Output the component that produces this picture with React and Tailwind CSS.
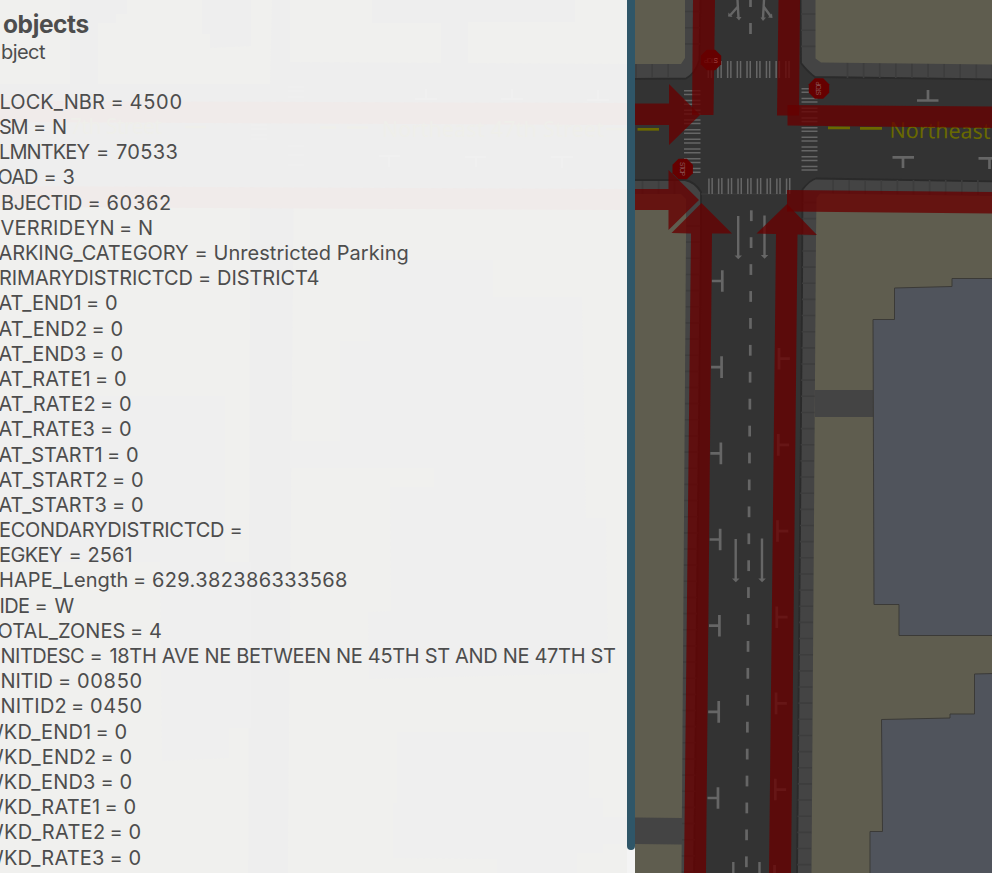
import React from "react";

const FAMILY = 'Inter, "Open Sans", sans-serif';
const ctx = document.createElement("canvas").getContext("2d");

// Text whose ink spans exactly `w` pixels, by adjusting the tracking.
function Fit({ text, w, size = 20, weight = 400 }) {
  ctx.font = `${weight} ${size}px ${FAMILY}`;
  const m = ctx.measureText(text);
  const ink = m.actualBoundingBoxRight + m.actualBoundingBoxLeft;
  const n = text.length - 1;
  const tracking = n > 0 ? (w - ink) / n : 0;
  return (
    <span className="block shrink-0 whitespace-pre" style={{ width: w }}>
      <span style={{ marginLeft: m.actualBoundingBoxLeft, letterSpacing: tracking, fontSize: size, fontWeight: weight }}>
        {text}
      </span>
    </span>
  );
}

// [key, key start, value, value start, value end]
const ROWS = [
  ["LOCK_NBR", 0.5, "4500", 130.5, 181.5],
  ["SM", 0, "N", 53, 65],
  ["LMNTKEY", 0, "70533", 116, 177.5],
  ["OAD", -1.5, "3", 63.5, 74],
  ["BJECTID", 2, "60362", 107.5, 170],
  ["VERRIDEYN", 0.5, "N", 139, 151],
  ["ARKING_CATEGORY", -1.5, "Unrestricted Parking", 214.5, 407.5],
  ["RIMARYDISTRICTCD", 0, "DISTRICT4", 218, 318.5],
  ["AT_END1", -1.5, "0", 106, 117],
  ["AT_END2", -1.5, "0", 111.5, 122.5],
  ["AT_END3", -1.5, "0", 111.5, 122.5],
  ["AT_RATE1", -1.5, "0", 115, 126],
  ["AT_RATE2", -1.5, "0", 120, 131],
  ["AT_RATE3", -1.5, "0", 120, 131],
  ["AT_START1", -1.5, "0", 127, 138],
  ["AT_START2", -1.5, "0", 132, 143],
  ["AT_START3", -1.5, "0", 132, 143],
  ["ECONDARYDISTRICTCD", 0, "", 249.5, 249.5],
  ["EGKEY", 0, "2561", 88.5, 131.5],
  ["HAPE_Length", 0, "629.382386333568", 153, 347],
  ["IDE", 0.5, "W", 54.5, 70],
  ["OTAL_ZONES", -1.5, "4", 150, 161.5],
  ["NITDESC", 1.5, "18TH AVE NE BETWEEN NE 45TH ST AND NE 47TH ST", 109.5, 615],
  ["NITID", 1.5, "00850", 78, 141.5],
  ["NITID2", 1.5, "0450", 91, 141.5],
  ["WKD_END1", -16, "0", 115.5, 126.5],
  ["WKD_END2", -16, "0", 120.5, 131.5],
  ["WKD_END3", -16, "0", 120.5, 131.5],
  ["WKD_RATE1", -16, "0", 124.5, 135.5],
  ["WKD_RATE2", -16, "0", 129.5, 140.5],
  ["WKD_RATE3", -16, "0", 129.5, 140.5],
];

function Row({ row }) {
  const [key, k0, value, v0, v1] = row;
  return (
    <div className="flex h-[25.2px] leading-[25.2px]" style={{ marginLeft: k0 }}>
      <Fit text={key} w={v0 - 25.5 - k0} />
      <div className="flex pr-[7.5px] pl-[7.5px]">
        <Fit text="=" w={10.5} />
      </div>
      {value && <Fit text={value} w={v1 - v0} />}
    </div>
  );
}

function FaintMap() {
  return (
    <svg className="absolute inset-0" width="627" height="873">
      <rect width="627" height="873" fill="#f0f0ee" />
      <g fill="#eeeeee">
        <path d="M70 0H127V14H116V23H98V84H270L272 0H290V62L627 64V190H0V84H70Z" />
        <path d="M250 180H294L288 873H248Z" />
        <path d="M202 0H251V46L210 48V34H202Z" />
        <path d="M372 0H575V22H468V64H441V23H372Z" />
      </g>
      <g fill="#efefef">
        <path d="M370 260H493V297H582L586 518H606L608 673L369 679L368 612L391 611L390 487H434V468H290V441H340V341H370Z" />
        <path d="M397 732H589V798H603V817H627V844H603V853H577V873H497V859L393 858V803H397Z" />
        <path d="M160 562H251V728H229V758L162 761Z" />
        <path d="M0 396H225V562H0Z" />
      </g>
      <path d="M0 101L627 103V125L0 122ZM0 186L627 189V210L0 207Z" fill="#f0ebea" />
      <path d="M426 89V99M415 99H437M512 89V99M501 99H523M598 90V100M587 100H609M379 156H400M389 156V167M465 157H486M476 157V167M551 157H573M562 157V168" stroke="#f0f0f0" strokeWidth="2" fill="none" />
      <path d="M320 127.500H336M347 127.500H368M606 129H627M185 127H206" stroke="#efefea" strokeWidth="2.500" />
      <g fill="#efefea" fontFamily='"Noto Sans", sans-serif' fontSize="21">
        <text x="382" y="137" textLength="222">Northeast 47th Street</text>
        <text x="70" y="134" textLength="92">7th Street</text>
      </g>
      <path d="M288 87h16M288 91h16M288 97h16M251 125h16M251 129h16M251 135h16M251 139h16M288 146h16M288 155h16M288 165h16" stroke="#f0f0f0" strokeWidth="1.300" />
    </svg>
  );
}

const seq = (n) => Array.from({ length: n }, (_, i) => i);

function StopSign({ x, y, turn, faint }) {
  return (
    <g transform={`translate(${x} ${y}) rotate(${turn})`}>
      <path d="M-4.200 -10.200H4.200L10.200 -4.200V4.200L4.200 10.200H-4.200L-10.200 4.200V-4.200Z" fill="#660000" />
      <text textAnchor="middle" y="2.400" fontSize="6.500" textLength="14" fontFamily='"Liberation Sans", sans-serif' fill={faint ? "#a04848" : "#8a5555"}>STOP</text>
    </g>
  );
}

function StreetMap() {
  return (
    <svg className="block shrink-0" width="357" height="873" viewBox="635 0 357 873">
      <rect x="635" width="357" height="873" fill="#333333" />

      <g fill="#444444" stroke="#2a2a2a" strokeWidth="1.800">
        <path d="M630 -5H700.500L699.500 60Q695 74 686 78.500L630 79Z" />
        <path d="M800.500 -5H1000V79.500L815 77Q808 72 801 63Z" />
        <path d="M630 180H685Q695 182 701 192L701 235L694 880H630Z" />
        <path d="M1000 181.500L816 178.500Q810 180 802.500 189.500L802 300L797 880H1000Z" />
      </g>
      <path d="M701 194H788" stroke="#3d3d3d" strokeWidth="1" />

      <g stroke="#3d3d3d" strokeWidth="1.600">
        {seq(3).map((i) => <path key={"a" + i} d={`M685 ${11.500 + i * 16.200}H700M801 ${14 + i * 16.200}H816`} />)}
        {seq(3).map((i) => <path key={"b" + i} d={`M${636 + i * 16.100} 64V78M${642.500 + i * 16.100} 181V194`} />)}
        {seq(10).map((i) => <path key={"c" + i} d={`M${847.500 + i * 16.100} 62V78M${833 + i * 16.100} 180V195`} />)}
        {seq(42).map((i) => {
          const y = 211 + i * 16.150;
          const d = (y - 235) / 118;
          return <path key={"d" + i} d={`M${686 - d} ${y + 15}h14M${802.500 - d} ${y - 8.500}h14`} />;
        })}
      </g>

      <g fill="#5f5d4f">
        <path d="M635 0H685V58L681 64H635Z" />
        <path d="M815.500 0H992V64.500L821 62.500L815.500 58.500Z" />
        <path d="M635 194H681L686 199V235L681.500 873H635Z" />
        <path d="M992 196L820 193.500L816.500 198L816 235L811.500 873H992Z" />
      </g>
      <path d="M635 817.500L682 818V844.500L635 844ZM815 390H874V417H815Z" fill="#444444" />

      <g fill="#50545c" stroke="#3b3a37" strokeWidth="1">
        <path d="M995 278.500H952V286.500L894.500 288V319.500H873L874 604.500H899V635.500H995Z" />
        <path d="M995 673.500L974.500 674V714H950V718L881.500 719.500L882.500 831.500H870V880H995Z" />
      </g>

      <g fill="#666666">
        {seq(9).map((i) => {
          const x = 707.500 + i * 9.700;
          return <path key={i} d={`M${x} 61h1.500v17h-1.500zM${x + 3.200} 61h1.500v17h-1.500zM${x + 0.700} 178.500h1.500v15.500h-1.500zM${x + 3.900} 178h1.500v16h-1.500z`} />;
        })}
        {seq(9).map((i) => {
          const y = 90 + i * 9.720;
          return <path key={i} d={`M684 ${y}h16.500v1.500h-16.500zM684 ${y + 3.700}h16.500v1.500h-16.500zM801.500 ${y - 2}h16v1.500h-16zM801.500 ${y + 1.600}h16v1.500h-16z`} />;
        })}
      </g>

      <g stroke="#666666" strokeWidth="2.700" fill="none">
        <path d="M750.500 0V7M750.500 23V34" />
        {seq(25).map((i) => {
          const y = 210.300 + i * 26.920;
          return <path key={i} d={`M${751.300 - i * 0.205} ${y}v10.800`} />;
        })}
        {seq(7).map((i) => {
          const y = 281 + i * 86.170;
          const x = 722.300 - i * 0.720;
          return <path key={i} d={`M${x} ${y - 10.800}v21.600M${x} ${y}h-10.500`} />;
        })}
        {seq(7).map((i) => {
          const y = 358.700 + i * 86.170;
          const x = 779 - i * 0.740;
          return <path key={i} d={`M${x} ${y - 10.800}v21.600M${x} ${y}h10.800`} />;
        })}
        <path d="M928 90V100M917 100.500H938.500M892.500 157.300H914M903 157.300V168M978.500 158.300H996M989.500 158.300V169" />
      </g>

      <g stroke="#666666" strokeWidth="2.400" fill="none">
        <path d="M738.200 216V256M764.500 215.500V256M735.700 539V579M762 538.500V579M733.300 862V875M759.500 862V875M737.500 0L738.500 18M737.500 7L730 15.500M764 0L763 18M764 7L770.500 16" />
      </g>
      <path d="M734.500 255.500h7.500l-3.700 3.800zM760.800 255h7.500l-3.700 3.800zM732 578.500h7.500l-3.700 3.800zM758.300 578.500h7.500l-3.700 3.800zM736 17h5.500l-2.500 3.500zM760.500 17.500h5.500l-3 3.500zM728.500 12.500l4 4.500l-4.500-.5zM772 13.500l-4 4l4.500.5z" fill="#666666" />

      <path d="M637.500 129.300H659" stroke="#6b6900" strokeWidth="2.700" />
      <path d="M828 127.800H850M860 128.400H882" stroke="#6b6900" strokeWidth="2.700" />
      <text x="889.500" y="137.800" fontSize="22" textLength="101" lengthAdjust="spacingAndGlyphs" transform="rotate(0.6 890 138)" fontFamily='"Noto Sans", sans-serif' fill="#696900">Northeast</text>

      <StopSign x={711} y={60} turn={180} faint />
      <StopSign x={819} y={88.500} turn={-90} />
      <StopSign x={682.700} y={169} turn={90} />

      <g fill="#660000" fillOpacity=".78">
        <path d="M693 0H715L713.500 115H692Z" />
        <path d="M778.500 0H800L799 115.500H777Z" />
        <path d="M635 103.500H669V84L700 115L669 145V125H635Z" />
        <path d="M787.500 105L992 106.500V128L787.500 125.500Z" />
        <path d="M635 189H668.500V170L699 200L668.500 230V210H635Z" />
        <path d="M787 190L992 192V213.500L787 211.500Z" />
        <path d="M701.500 203L732 233.500H712L706 873H684L691 233.500L671.500 233Z" />
        <path d="M787 204L817 235L797.500 234.500L791 873H769L776 234L756.500 233.500Z" />
      </g>
    </svg>
  );
}

export default function App() {
  return (
    <div className="flex h-[873px] w-[992px] overflow-hidden bg-[#333333]">
      <section className="relative flex h-full w-[635px] shrink-0 overflow-hidden bg-[#f4f4f4]">
        <FaintMap />
        <div className="relative w-[627px] shrink-0 overflow-hidden pt-[8.5px] font-[Inter] text-[#4d4d4d]">
          <div className="ml-[3px] flex h-[30px] leading-[30px]">
            <Fit text="objects" w={85.5} size={24.500} weight={700} />
          </div>
          <div className="ml-[2px] flex h-[51.4px] leading-[26px]">
            <Fit text="bject" w={44} />
          </div>
          {ROWS.map((row) => (
            <Row key={row[0]} row={row} />
          ))}
        </div>
        <div className="h-[850px] w-[8px] shrink-0 rounded-b-full bg-[#2f5668]" />
      </section>
      <StreetMap />
    </div>
  );
}
